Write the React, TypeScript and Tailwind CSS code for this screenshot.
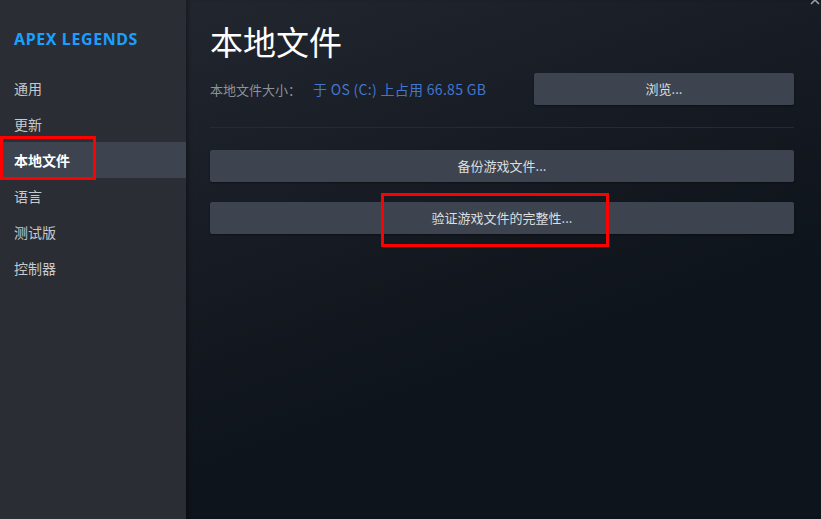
const navItems = ['通用', '更新', '本地文件', '语言', '测试版', '控制器']

function ActionButton({ label, className = '' }: { label: string; className?: string }) {
  return (
    <button
      className={`flex h-[32px] items-center justify-center rounded-[2px] bg-[#3d4450] text-[13px] text-[#dcdedf] shadow-[0_1px_2px_rgba(0,0,0,0.4)] ${className}`}
    >
      {label}
    </button>
  )
}

export default function App() {
  return (
    <div
      className="flex h-[519px] w-[821px] overflow-hidden bg-[#0e141b]"
      style={{ fontFamily: '"Noto Sans CJK SC", "Noto Sans", sans-serif' }}
    >
      {/* sidebar */}
      <aside className="w-[186px] shrink-0 bg-[#2a2d34] pt-[27px]">
        <div
          className="pl-[14px] text-[16px] font-bold tracking-[0.6px] text-[#1a9fff]"
          style={{ fontFamily: '"Noto Sans", "Open Sans", sans-serif' }}
        >
          APEX LEGENDS
        </div>
        <nav className="mt-[19px] flex flex-col">
          {navItems.map((item) => {
            const active = item === '本地文件'
            return (
              <div
                key={item}
                className={`relative flex h-[36px] items-center pl-[14px] text-[14px] ${
                  active ? 'bg-[#3d4450] font-bold text-white' : 'text-[#c6c9cd]'
                }`}
              >
                {item}
                {active && (
                  <span className="pointer-events-none absolute left-0 top-[-6px] h-[44px] w-[96px] border-[3px] border-[#ff0000]" />
                )}
              </div>
            )
          })}
        </nav>
      </aside>

      {/* main */}
      <main className="relative flex-1 bg-[linear-gradient(160deg,#22262e_0%,#171b23_35%,#0e141b_65%)] pl-[24px] pr-[27px] shadow-[inset_4px_0_4px_-2px_rgba(0,0,0,0.35)]">
        <svg
          className="absolute right-[1px] top-[-3px] h-[9px] w-[10px]"
          viewBox="0 0 10 9"
          fill="none"
          stroke="#9aa0a6"
          strokeWidth="1.6"
        >
          <path d="M1 7 L5 3 L9 7" />
        </svg>

        <h1 className="mt-[19px] text-[33px] leading-[44px] text-white">本地文件</h1>

        <div className="mt-[10px] flex items-center justify-between">
          <div className="text-[13px]">
            <span className="text-[#8b929a]">本地文件大小：</span>
            <span className="ml-[12px] text-[14px] tracking-[0.3px] text-[#4277cf]">于 OS (C:) 上占用 66.85 GB</span>
          </div>
          <ActionButton label="浏览..." className="w-[260px]" />
        </div>

        <div className="mt-[22px] h-px bg-[#262b33]" />

        <div className="mt-[22px] flex flex-col gap-[20px]">
          <ActionButton label="备份游戏文件..." className="w-full" />
          <div className="relative">
            <ActionButton label="验证游戏文件的完整性..." className="w-full" />
            <span className="pointer-events-none absolute left-[171px] top-[-9px] h-[54px] w-[228px] border-[3px] border-[#ff0000]" />
          </div>
        </div>
      </main>
    </div>
  )
}
